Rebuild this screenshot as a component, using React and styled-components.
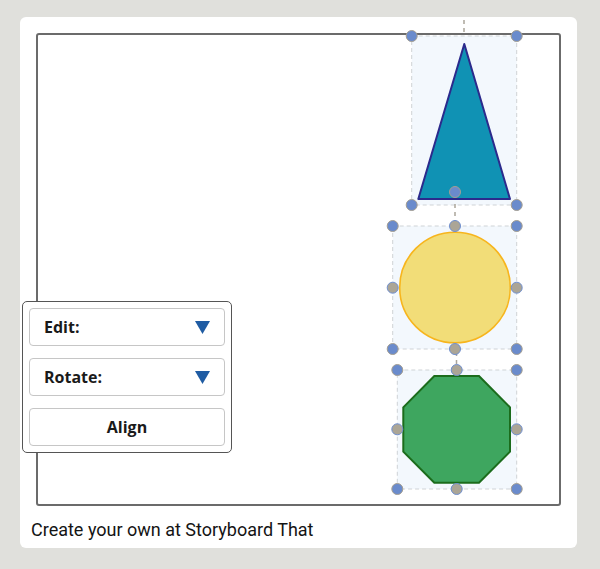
import React from "react";
import styled, { createGlobalStyle } from "styled-components";

const Global = createGlobalStyle`
  html, body { margin: 0; padding: 0; background: #e0e0dc; }
  body { font-family: Roboto, "Liberation Sans", sans-serif; }
`;

const Card = styled.div`
  margin: 17px 0 0 20px;
  width: 557px;
  box-sizing: border-box;
  background: #ffffff;
  border-radius: 6px;
  padding: 16px 16px 7px 11px;
`;

const Frame = styled.div`
  position: relative;
  margin-left: 5px;
  height: 473px;
  box-sizing: border-box;
  border: 2px solid #6b6b6b;
  border-radius: 3px;
  background: #ffffff;
`;

const Canvas = styled.svg`
  position: absolute;
  left: -2px;
  top: -2px;
  overflow: visible;
`;

const Caption = styled.div`
  margin-top: 12px;
  font-family: Roboto, "Liberation Sans", sans-serif;
  font-size: 18px;
  line-height: 23px;
  color: #141414;
`;

const Panel = styled.div`
  position: absolute;
  left: -16px;
  top: 266px;
  width: 210px;
  box-sizing: border-box;
  background: #ffffff;
  border: 1.5px solid #555555;
  border-radius: 5px;
  padding: 6px;
  display: flex;
  flex-direction: column;
  gap: 12px;
`;

const ToolButton = styled.div`
  height: 38px;
  box-sizing: border-box;
  border: 1px solid #c6c6c6;
  border-radius: 4px;
  padding: 0 14px;
  display: flex;
  align-items: center;
  justify-content: ${(p) => (p.$center ? "center" : "space-between")};
  font-family: "Open Sans", "Noto Sans", sans-serif;
  font-weight: 700;
  font-size: 16px;
  color: #1a1a1a;
`;

const Caret = styled.svg`
  width: 15px;
  height: 13px;
  display: block;
`;

const Handle = ({ x, y, mid }) => (
  <circle
    cx={x}
    cy={y}
    r={5.5}
    fill={mid ? "#aba596" : "#6a8bcc"}
    stroke={mid ? "#6f8fcf" : "#a49e92"}
    strokeWidth={1}
  />
);

const SelBox = ({ x1, y1, x2, y2 }) => (
  <rect
    x={x1}
    y={y1}
    width={x2 - x1}
    height={y2 - y1}
    fill="#f3f8fd"
    stroke="#cfd3d6"
    strokeWidth={1}
    strokeDasharray="4 3"
  />
);

const Dash = ({ x, y1, y2 }) => (
  <line x1={x} y1={y1} x2={x} y2={y2} stroke="#aaa59b" strokeWidth={1.5} strokeDasharray="4 4" />
);

function Drawing() {
  const tri = { x1: 411.7, y1: 36, x2: 516.7, y2: 205 };
  const cir = { x1: 392.7, y1: 226, x2: 516.7, y2: 349 };
  const oct = { x1: 397.3, y1: 370, x2: 516.7, y2: 489 };
  return (
    <Canvas width="525" height="473" viewBox="36 33 525 473">
      <SelBox {...tri} />
      <SelBox {...cir} />
      <SelBox {...oct} />
      <Dash x={464} y1={20} y2={36} />
      <Dash x={455} y1={196} y2={226} />
      <Dash x={456.5} y1={352} y2={370} />
      <polygon
        points="464.3,44 418.3,199 510,199"
        fill="#1092b4"
        stroke="#2b2a8c"
        strokeWidth={2}
        strokeLinejoin="round"
      />
      <circle cx={455} cy={287.5} r={55.3} fill="#f2dd78" stroke="#f7b51d" strokeWidth={1.6} />
      <polygon
        points="434.3,376 479,376 510,407.3 510,451.7 479,482.7 434.3,482.7 403.3,451.7 403.3,407.3"
        fill="#3ea65f"
        stroke="#1b6c1c"
        strokeWidth={2}
      />
      <Handle x={tri.x1} y={tri.y1} />
      <Handle x={tri.x2} y={tri.y1} />
      <Handle x={tri.x1} y={tri.y2} />
      <Handle x={tri.x2} y={tri.y2} />
      <Handle x={455} y={192} />

      <Handle x={cir.x1} y={cir.y1} />
      <Handle x={cir.x2} y={cir.y1} />
      <Handle x={cir.x1} y={cir.y2} />
      <Handle x={cir.x2} y={cir.y2} />
      <Handle x={455} y={cir.y1} mid />
      <Handle x={455} y={cir.y2} mid />
      <Handle x={cir.x1} y={287.7} mid />
      <Handle x={cir.x2} y={287.7} mid />

      <Handle x={oct.x1} y={oct.y1} />
      <Handle x={oct.x2} y={oct.y1} />
      <Handle x={oct.x1} y={oct.y2} />
      <Handle x={oct.x2} y={oct.y2} />
      <Handle x={456.7} y={oct.y1} mid />
      <Handle x={456.7} y={oct.y2} mid />
      <Handle x={oct.x1} y={429.3} mid />
      <Handle x={oct.x2} y={429.3} mid />
    </Canvas>
  );
}

const DownCaret = () => (
  <Caret viewBox="0 0 15 13">
    <polygon points="0,0 15,0 7.5,13" fill="#1f5ca3" />
  </Caret>
);

export default function App() {
  return (
    <>
      <Global />
      <Card>
        <Frame>
          <Drawing />
          <Panel>
            <ToolButton>
              <span>Edit:</span>
              <DownCaret />
            </ToolButton>
            <ToolButton>
              <span>Rotate:</span>
              <DownCaret />
            </ToolButton>
            <ToolButton $center>Align</ToolButton>
          </Panel>
        </Frame>
        <Caption>Create your own at Storyboard That</Caption>
      </Card>
    </>
  );
}
